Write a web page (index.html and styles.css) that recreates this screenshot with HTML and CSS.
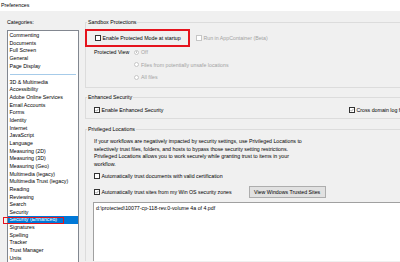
FILE: index.html
```html
<!DOCTYPE html>
<html lang="en">
<head>
    <meta charset="UTF-8">
    <meta name="viewport" content="width=device-width, initial-scale=1.0">
    <title>Preferences</title>
    <link rel="stylesheet" href="styles.css">
</head>
<body>
    <div class="titlebar">Preferences</div>
    <div class="main">
        <div class="sidebar">
            <div class="cat-label">Categories:</div>
            <ul class="cat-list">
                <li>Commenting</li>
                <li>Documents</li>
                <li>Full Screen</li>
                <li>General</li>
                <li>Page Display</li>
                <li class="sep"></li>
                <li>3D &amp; Multimedia</li>
                <li>Accessibility</li>
                <li>Adobe Online Services</li>
                <li>Email Accounts</li>
                <li>Forms</li>
                <li>Identity</li>
                <li>Internet</li>
                <li>JavaScript</li>
                <li>Language</li>
                <li>Measuring (2D)</li>
                <li>Measuring (3D)</li>
                <li>Measuring (Geo)</li>
                <li>Multimedia (legacy)</li>
                <li>Multimedia Trust (legacy)</li>
                <li>Reading</li>
                <li>Reviewing</li>
                <li>Search</li>
                <li>Security</li>
                <li class="selected">Security (Enhanced)</li>
                <li>Signatures</li>
                <li>Spelling</li>
                <li>Tracker</li>
                <li>Trust Manager</li>
                <li>Units</li>
            </ul>
        </div>

        <div class="content">
            <fieldset class="group sandbox">
                <legend>Sandbox Protections</legend>
                <div class="row">
                    <label class="check highlight"><span class="box"></span>Enable Protected Mode at startup</label>
                    <label class="check disabled appcontainer"><span class="box"></span>Run in AppContainer (Beta)</label>
                </div>
                <div class="pv">
                    <span class="pv-label">Protected View</span>
                    <div class="radios">
                        <label class="radio disabled on"><span class="dot"></span>Off</label>
                        <label class="radio disabled"><span class="dot"></span>Files from potentially unsafe locations</label>
                        <label class="radio disabled"><span class="dot"></span>All files</label>
                    </div>
                </div>
            </fieldset>

            <fieldset class="group enhanced">
                <legend>Enhanced Security</legend>
                <div class="row">
                    <label class="check first"><span class="box"><svg viewBox="0 0 12 12"><path d="M1.5 6.5 L4.6 9.6 L10.5 2.5"/></svg></span>Enable Enhanced Security</label>
                    <label class="check cross"><span class="box"><svg viewBox="0 0 12 12"><path d="M1.5 6.5 L4.6 9.6 L10.5 2.5"/></svg></span>Cross domain log f</label>
                </div>
            </fieldset>

            <fieldset class="group privileged">
                <legend>Privileged Locations</legend>
                <p>If your workflows are negatively impacted by security settings, use Privileged Locations to<br>
                selectively trust files, folders, and hosts to bypass those security setting restrictions.<br>
                Privileged Locations allows you to work securely while granting trust to items in your<br>
                workflow.</p>
                <label class="check cert"><span class="box"></span>Automatically trust documents with valid certification</label>
                <div class="row sites">
                    <label class="check"><span class="box"><svg viewBox="0 0 12 12"><path d="M1.5 6.5 L4.6 9.6 L10.5 2.5"/></svg></span>Automatically trust sites from my Win OS security zones</label>
                    <button type="button">View Windows Trusted Sites</button>
                </div>
                <ul class="locations">
                    <li>d:\protected\10077-cp-118-rev.0-volume 4a of 4.pdf</li>
                </ul>
            </fieldset>
        </div>
    </div>
</body>
</html>
```

FILE: styles.css
```css
body {
    margin: 0;
    width: 400px;
    height: 262px;
    overflow: hidden;
    background: #f0f0f0;
    font-family: "Liberation Sans", Arial, sans-serif;
    font-size: 5.25px;
    color: #000;
}
.titlebar {
    height: 11px;
    line-height: 10px;
    padding-left: 1px;
    background: #fff;
}
.main {
    display: flex;
    height: 251px;
    overflow: hidden;
}

/* categories */
.sidebar {
    width: 83px;
    flex: none;
    padding-left: 7px;
    box-sizing: border-box;
}
.cat-label {
    line-height: 8px;
    margin: 7px 0 4px;
}
.cat-list {
    list-style: none;
    margin: 0;
    padding: 1px 0 0;
    width: 72px;
    height: 232px;
    background: #fff;
    border: 1px solid #828790;
    border-bottom: none;
    box-sizing: border-box;
}
.cat-list li {
    position: relative;
    line-height: 7.65px;
    padding-left: 1.5px;
    white-space: nowrap;
}
.cat-list .sep {
    height: 1px;
    margin: 3.7px 2px 3.7px 1.5px;
    padding: 0;
    background: #a6cbe9;
}
.cat-list .selected {
    background: #0078d7;
    color: #fff;
}
/* red marker drawn over the selected category */
.cat-list .selected::after {
    content: "";
    position: absolute;
    left: -5px;
    top: 1px;
    width: 61px;
    height: 7px;
    border: 1.5px solid #e5131d;
    box-sizing: border-box;
}

/* settings */
.content {
    flex: 1;
    min-width: 0;
    padding-left: 2px;
}
.group {
    margin: 0 -5px 0 0;
    padding: 0 0 0 8px;
    border: 1px solid #dcdcdc;
    min-width: 0;
}
.group legend {
    margin-left: -7px;
    padding: 0 1px;
    line-height: 8px;
}
.row {
    display: flex;
    align-items: center;
    white-space: nowrap;
}
.check {
    display: flex;
    align-items: center;
    line-height: 8px;
    white-space: nowrap;
}
.check .box {
    display: flex;
    align-items: center;
    justify-content: center;
    width: 6px;
    height: 6px;
    margin-right: 1.5px;
    flex: none;
    border: 1px solid #333;
    background: #fff;
    box-sizing: border-box;
}
.check .box svg {
    display: block;
    width: 4px;
    height: 4px;
    overflow: visible;
    fill: none;
    stroke: #333;
    stroke-width: 1.3;
}
.disabled {
    color: #a3a3a3;
}
.check.disabled .box {
    border-color: #c6c6c6;
}

.sandbox {
    margin-top: 7px;
    padding-bottom: 5.5px;
}
.sandbox .row {
    margin-top: 3px;
}
.highlight {
    width: 105px;
    height: 18px;
    margin-left: -9px;
    padding-left: 8px;
    border: 2px solid #e5131d;
    box-sizing: border-box;
}
.appcontainer {
    margin-left: 6px;
}
.pv {
    display: flex;
    margin-top: 1px;
}
.pv-label {
    width: 40px;
    line-height: 8px;
}
.radios {
    display: flex;
    flex-direction: column;
    gap: 4.5px;
}
.radio {
    display: flex;
    align-items: center;
    line-height: 8px;
}
.radio .dot {
    width: 5px;
    height: 5px;
    margin-right: 2px;
    border: 1px solid #c6c6c6;
    border-radius: 50%;
    background: #fff;
    box-sizing: border-box;
    position: relative;
}
.radio.on .dot::after {
    content: "";
    position: absolute;
    left: 0.75px;
    top: 0.75px;
    width: 1.5px;
    height: 1.5px;
    border-radius: 50%;
    background: #bcbcbc;
}

.enhanced {
    margin-top: 5.5px;
    padding-bottom: 4px;
}
.enhanced .row {
    margin-top: 5px;
}
.enhanced .first {
    width: 255px;
}

.privileged {
    margin-top: 6px;
    border-bottom: none;
    padding-bottom: 0;
}
.privileged p {
    margin: 5.3px 0 0;
    line-height: 7.4px;
}
.cert {
    margin-top: 4px;
}
.sites {
    margin-top: 6px;
    height: 12px;
}
.sites button {
    width: 77px;
    height: 12px;
    margin-left: 17px;
    padding: 0;
    font-family: inherit;
    font-size: 5.25px;
    color: #000;
    background: #e1e1e1;
    border: 1px solid #adadad;
}
.locations {
    list-style: none;
    margin: 4px 0 0 -1px;
    padding: 1px 2px;
    height: 59px;
    box-sizing: border-box;
    background: #fff;
    border: 1px solid #a0a0a0;
    border-bottom: none;
}
.locations li {
    line-height: 8px;
}
```
